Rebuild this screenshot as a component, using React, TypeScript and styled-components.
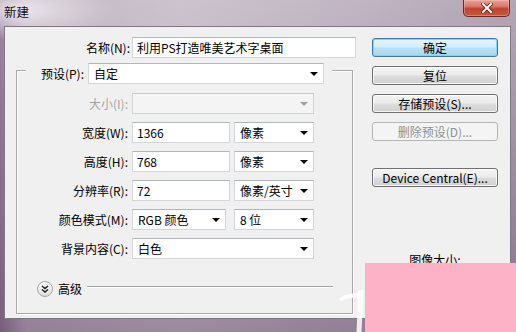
import React from "react";
import styled, { createGlobalStyle } from "styled-components";

const Global = createGlobalStyle`
  html, body { margin: 0; padding: 0; }
  body {
    width: 516px; height: 332px; overflow: hidden;
    font-family: "Noto Sans CJK SC", "Noto Sans", sans-serif;
    font-size: 12px; color: #000;
  }
  * { box-sizing: border-box; }
`;

const Screen = styled.div`
  position: relative;
  width: 516px;
  height: 332px;
  display: flex;
  flex-direction: column;
  overflow: hidden;
  background:
    radial-gradient(ellipse 90px 30px at 22px 10px, rgba(236, 232, 237, 0.95), rgba(236, 232, 237, 0) 100%),
    linear-gradient(180deg, rgba(255, 255, 255, 0.15) 0%, rgba(255, 255, 255, 0) 30%, rgba(80, 50, 85, 0.35) 100%),
    linear-gradient(90deg, #8e7592 0%, #b9abbb 5%, #c4b9c5 35%, #b6a8b8 70%, #a596a8 100%);
`;

const TitleBar = styled.div`
  flex: none;
  height: 26px;
  display: flex;
  justify-content: space-between;
  align-items: flex-start;
`;

const Title = styled.div`
  padding: 4px 0 0 4px;
  font-size: 12.5px;
  line-height: 15px;
  color: #111;
`;

const CloseButton = styled.div`
  width: 47px;
  height: 17px;
  margin-right: 6px;
  border: 1px solid #6b2a20;
  border-top: none;
  border-radius: 0 0 5px 5px;
  background: linear-gradient(180deg, #e6a597 0%, #d8776a 40%, #c2422c 55%, #cc5638 100%);
  box-shadow: inset 0 0 0 1px rgba(255, 210, 200, 0.35);
  display: flex;
  align-items: center;
  justify-content: center;
`;

const Body = styled.div`
  flex: none;
  height: 293px;
  margin: 0 5px 0 4px;
  background: #f0f0f0;
  border: 1px solid #7c7884;
  display: flex;
  gap: 16px;
  padding: 10px 0 0 11px;
`;

const LeftColumn = styled.div`
  width: 340px;
  display: flex;
  flex-direction: column;
`;

const NameRow = styled.div`
  display: flex;
  align-items: center;
  height: 21px;
  gap: 2px;
`;

const Label = styled.label<{ $w: number; $disabled?: boolean }>`
  width: ${(p) => p.$w}px;
  flex: none;
  text-align: right;
  line-height: 21px;
  white-space: nowrap;
  color: ${(p) => (p.$disabled ? "#a3a3a3" : "#000")};
`;

const TextBox = styled.div<{ $w: number }>`
  width: ${(p) => p.$w}px;
  height: 21px;
  background: #fff;
  border: 1px solid #d3d7dd;
  border-top-color: #b1b5bc;
  padding: 0 4px;
  line-height: 19px;
  white-space: nowrap;
  overflow: hidden;
`;

const Combo = styled.div<{ $w?: number; $disabled?: boolean }>`
  width: ${(p) => (p.$w ? `${p.$w}px` : "auto")};
  height: 21px;
  background: ${(p) => (p.$disabled ? "#f4f4f4" : "#fff")};
  border: 1px solid ${(p) => (p.$disabled ? "#d2d2d2" : "#d3d7dd")};
  border-top-color: ${(p) => (p.$disabled ? "#c8c8c8" : "#b1b5bc")};
  padding: 0 5px 0 5px;
  display: flex;
  align-items: center;
  justify-content: space-between;
  line-height: 19px;
  white-space: nowrap;
`;

const GroupBox = styled.div`
  margin-top: 12px;
  width: 337px;
  border: 1px solid #a9a9a9;
  box-shadow: inset 1px 1px 0 #fff, 1px 1px 0 #fff;
  display: flex;
  flex-direction: column;
  padding-bottom: 16px;
`;

const GroupHeader = styled.div`
  margin: -8px 0 0 9px;
  width: 306px;
  background: #f0f0f0;
  padding: 0 8px 0 9px;
  display: flex;
  align-items: center;
  gap: 4px;
`;

const Fields = styled.div`
  margin-top: 9px;
  display: flex;
  flex-direction: column;
  gap: 8px;
`;

const FieldRow = styled.div`
  display: grid;
  grid-template-columns: 111px 98px 80px;
  column-gap: 4px;
  height: 21px;
  align-items: center;
`;

const Wide = styled.div`
  grid-column: 2 / 4;
`;

const AdvancedRow = styled.div`
  margin-top: 22px;
  height: 16px;
  display: flex;
  align-items: center;
  gap: 5px;
  padding: 0 19px 0 20px;
`;

const AdvancedText = styled.span`
  line-height: 16px;
`;

const Rule = styled.div`
  flex: 1;
  align-self: flex-start;
  margin-top: 5px;
  margin-left: 0px;
  height: 2px;
  border-top: 1px solid #a3a3a3;
  border-bottom: 1px solid #ffffff;
`;

const RightColumn = styled.div`
  width: 126px;
  display: flex;
  flex-direction: column;
  padding-top: 1px;
  gap: 9px;
`;

const Button = styled.div<{ $variant?: "default" | "normal" | "disabled"; $space?: number }>`
  height: 19px;
  width: 126px;
  margin-top: ${(p) => p.$space ?? 0}px;
  border-radius: 3px;
  text-align: center;
  line-height: 17px;
  border: 1px solid
    ${(p) => (p.$variant === "default" ? "#3d7bad" : p.$variant === "disabled" ? "#b3b6b9" : "#707070")};
  color: ${(p) => (p.$variant === "disabled" ? "#8f8f8f" : "#000")};
  background: ${(p) =>
    p.$variant === "default"
      ? "linear-gradient(180deg, #e6f5fd 0%, #d3edfb 48%, #b9e1f8 52%, #a6d7f3 100%)"
      : p.$variant === "disabled"
      ? "#f4f4f4"
      : "linear-gradient(180deg, #f4f4f4 0%, #ebebeb 48%, #dddddd 52%, #d0d0d0 100%)"};
  box-shadow: ${(p) =>
    p.$variant === "default"
      ? "inset 0 0 0 1px #7ed3f7"
      : p.$variant === "disabled"
      ? "none"
      : "inset 0 0 0 1px rgba(255,255,255,0.75)"};
  white-space: nowrap;
`;

const InfoTitle = styled.div`
  margin-top: 57px;
  text-align: center;
  line-height: 14px;
`;

const Watermark = styled.div`
  position: absolute;
  left: 365px;
  top: 263px;
  width: 151px;
  height: 69px;
  background: #fdb2c8;
`;

const WatermarkMark = styled.svg`
  position: absolute;
  left: 334px;
  top: 280px;
`;

const Arrow = ({ color = "#000" }: { color?: string }) => (
  <svg width="8" height="4" viewBox="0 0 8 4" style={{ flex: "none" }}>
    <path d="M0 0 H8 L4 4 Z" fill={color} />
  </svg>
);

const ExpandIcon = () => (
  <svg width="16" height="16" viewBox="0 0 16 16">
    <defs>
      <linearGradient id="eg" x1="0" y1="0" x2="0" y2="1">
        <stop offset="0" stopColor="#ffffff" />
        <stop offset="1" stopColor="#dcdcdc" />
      </linearGradient>
    </defs>
    <circle cx="8" cy="8" r="7.5" fill="url(#eg)" stroke="#a6a6a6" />
    <path d="M5 5 L8 7.5 L11 5 M5 8.5 L8 11 L11 8.5" fill="none" stroke="#222" strokeWidth="1.5" />
  </svg>
);

export default function App() {
  return (
    <>
      <Global />
      <Screen>
        <TitleBar>
          <Title>新建</Title>
          <CloseButton>
            <svg width="12" height="10" viewBox="0 0 12 10">
              <path d="M2 1 L10 9 M10 1 L2 9" stroke="#5a1a12" strokeWidth="3.6" strokeLinecap="square" />
              <path d="M2 1 L10 9 M10 1 L2 9" stroke="#ffffff" strokeWidth="2" strokeLinecap="square" />
            </svg>
          </CloseButton>
        </TitleBar>
        <Body>
          <LeftColumn>
            <NameRow>
              <Label $w={114}>名称(N):</Label>
              <TextBox $w={224}>利用PS打造唯美艺术字桌面</TextBox>
            </NameRow>
            <GroupBox>
              <GroupHeader>
                <Label $w={49}>预设(P):</Label>
                <Combo $w={236}>
                  <span>自定</span>
                  <Arrow />
                </Combo>
              </GroupHeader>
              <Fields>
                <FieldRow>
                  <Label $w={111} $disabled>大小(I):</Label>
                  <Wide>
                    <Combo $disabled>
                      <span />
                      <Arrow color="#a0a0a0" />
                    </Combo>
                  </Wide>
                </FieldRow>
                <FieldRow>
                  <Label $w={111}>宽度(W):</Label>
                  <TextBox $w={98}>1366</TextBox>
                  <Combo $w={80}>
                    <span>像素</span>
                    <Arrow />
                  </Combo>
                </FieldRow>
                <FieldRow>
                  <Label $w={111}>高度(H):</Label>
                  <TextBox $w={98}>768</TextBox>
                  <Combo $w={80}>
                    <span>像素</span>
                    <Arrow />
                  </Combo>
                </FieldRow>
                <FieldRow>
                  <Label $w={111}>分辨率(R):</Label>
                  <TextBox $w={98}>72</TextBox>
                  <Combo $w={80}>
                    <span>像素/英寸</span>
                    <Arrow />
                  </Combo>
                </FieldRow>
                <FieldRow>
                  <Label $w={111}>颜色模式(M):</Label>
                  <Combo $w={94}>
                    <span>RGB 颜色</span>
                    <Arrow />
                  </Combo>
                  <Combo $w={80}>
                    <span>8 位</span>
                    <Arrow />
                  </Combo>
                </FieldRow>
                <FieldRow>
                  <Label $w={111}>背景内容(C):</Label>
                  <Wide>
                    <Combo>
                      <span>白色</span>
                      <Arrow />
                    </Combo>
                  </Wide>
                </FieldRow>
              </Fields>
              <AdvancedRow>
                <ExpandIcon />
                <AdvancedText>高级</AdvancedText>
                <Rule />
              </AdvancedRow>
            </GroupBox>
          </LeftColumn>
          <RightColumn>
            <Button $variant="default">确定</Button>
            <Button>复位</Button>
            <Button>存储预设(S)...</Button>
            <Button $variant="disabled">删除预设(D)...</Button>
            <Button $space={18}>Device Central(E)...</Button>
            <InfoTitle>图像大小:</InfoTitle>
          </RightColumn>
        </Body>
        <WatermarkMark width="34" height="52" viewBox="0 0 34 52">
          <path d="M6 20 Q 16 14 27 16" fill="none" stroke="rgba(255,255,255,0.85)" strokeWidth="4" />
          <path d="M27 10 L25 52" fill="none" stroke="rgba(255,255,255,0.85)" strokeWidth="5" />
        </WatermarkMark>
        <Watermark />
      </Screen>
    </>
  );
}
